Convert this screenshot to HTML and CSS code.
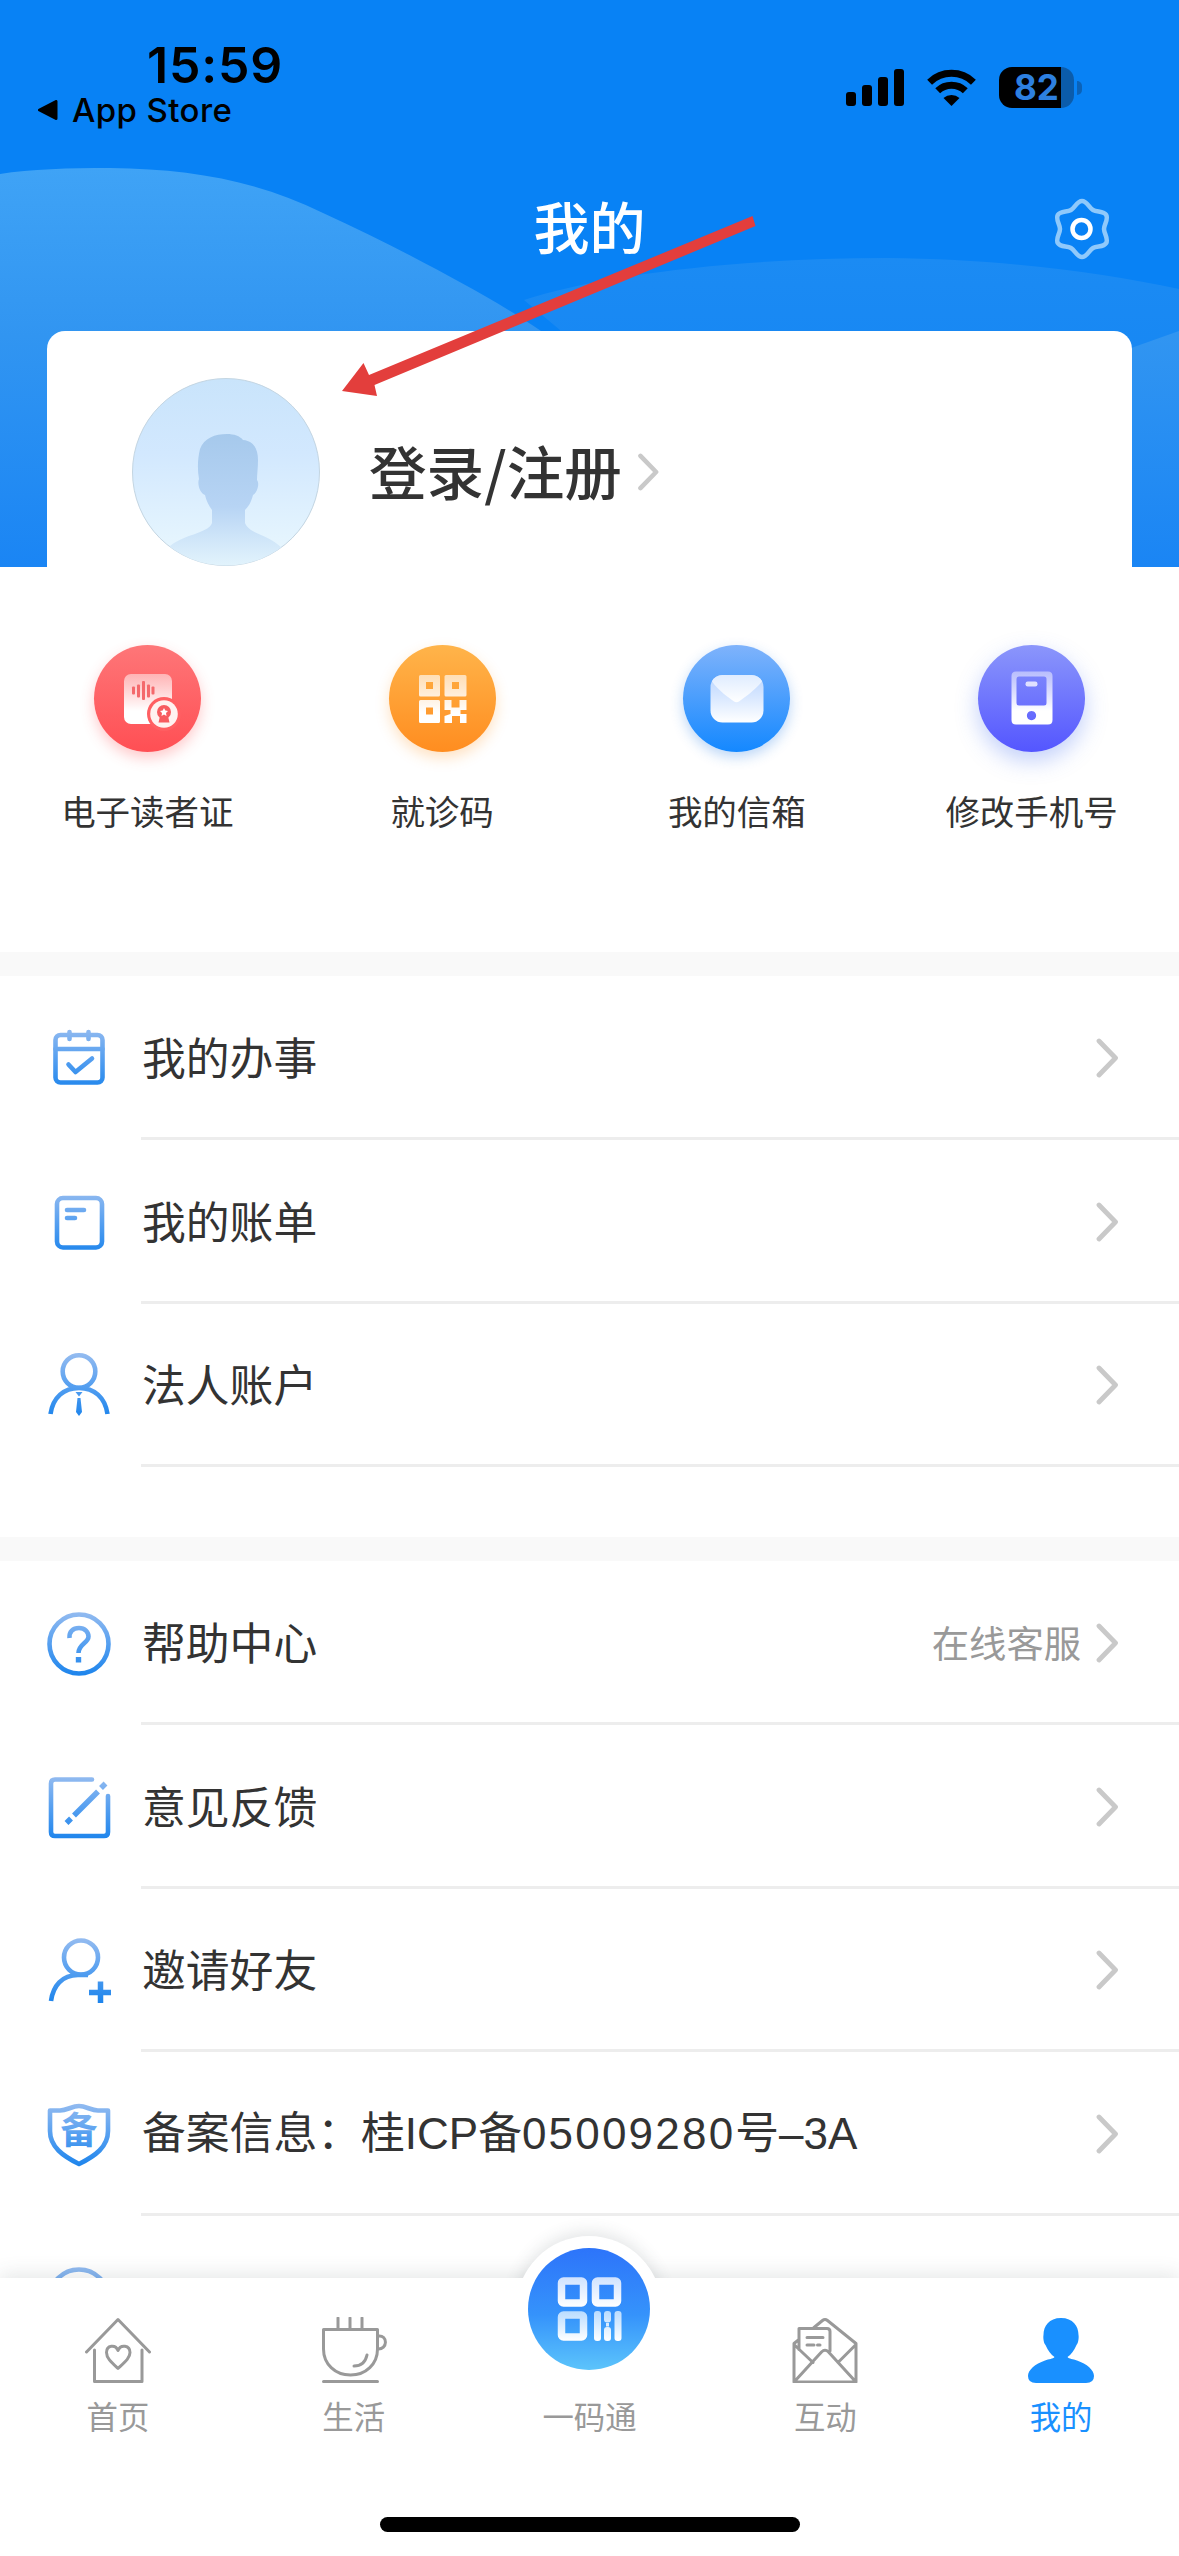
FILE: index.html
```html
<!DOCTYPE html>
<html lang="zh-CN">
<head>
<meta charset="utf-8">
<title>我的</title>
<link rel="stylesheet" href="styles.css">
</head>
<body>
<svg class="defs" width="0" height="0" aria-hidden="true">
  <defs>
    <linearGradient id="line" gradientUnits="userSpaceOnUse" x1="0" y1="0" x2="0" y2="64"><stop offset="0" stop-color="#93bbf0"/><stop offset=".5" stop-color="#559ff0"/><stop offset="1" stop-color="#1c84ec"/></linearGradient>
    <linearGradient id="glass" gradientUnits="userSpaceOnUse" x1="0" y1="26" x2="0" y2="79"><stop offset="0" stop-color="#fff" stop-opacity=".45"/><stop offset=".75" stop-color="#fff"/></linearGradient>
    <linearGradient id="glass2" gradientUnits="userSpaceOnUse" x1="0" y1="28" x2="0" y2="78"><stop offset="0" stop-color="#fff" stop-opacity=".6"/><stop offset=".8" stop-color="#fff"/></linearGradient>
    <symbol id="chevron" viewBox="0 0 24 40"><path d="M3 3L19.500 20L3 37" fill="none" stroke="#c9c9c9" stroke-width="4.800" stroke-linecap="round" stroke-linejoin="round"/></symbol>
  </defs>
</svg>

<main class="page">
  <header class="hero">
    <svg class="hero-waves" viewBox="0 0 1179 567" width="1179" height="567">
      <defs>
        <linearGradient id="w1" gradientUnits="userSpaceOnUse" x1="0" y1="168" x2="0" y2="567"><stop offset="0" stop-color="#3fa3f6"/><stop offset=".42" stop-color="#3195f1"/><stop offset="1" stop-color="#1a85f4"/></linearGradient>
        <linearGradient id="w2" gradientUnits="userSpaceOnUse" x1="0" y1="258" x2="0" y2="567"><stop offset="0" stop-color="#1b8bf3"/><stop offset="1" stop-color="#0f80f3"/></linearGradient>
      </defs>
      <path d="M524 300C600 275 740 258 887 258C1000 259 1100 272 1179 289V567H560V330Z" fill="url(#w2)"/>
      <path d="M1060 375L1134 347L1179 331V567H1060Z" fill="url(#w1)"/>
      <path d="M0 174C30 169 70 168 110 168C190 169 255 180 323 213C355 228 385 242 413 257C455 279 505 306 541 331L560 350V567H0Z" fill="url(#w1)"/>
    </svg>
    <div class="status">
      <div class="status-left">
        <span class="time">15:59</span>
        <span class="back">
          <svg width="20" height="20" viewBox="0 0 20 20"><path d="M18 1.500V18.500L1.500 10Z" stroke="#000" stroke-width="3" stroke-linejoin="round"/></svg>
          <span>App Store</span>
        </span>
      </div>
      <div class="status-right">
        <svg width="58" height="37" viewBox="0 0 58 37"><rect y="23" width="10" height="14" rx="3"/><rect x="16" y="16" width="10" height="21" rx="3"/><rect x="32" y="8" width="10" height="29" rx="3"/><rect x="48" width="10" height="37" rx="3"/></svg>
        <svg class="wifi" width="49" height="37" viewBox="0 0 49 37"><path d="M2.600 13.200A31.500 31.500 0 0 1 46.400 13.200M10.700 21.700A20 20 0 0 1 38.300 21.700" fill="none" stroke="#000" stroke-width="7"/><path d="M24.500 37L16.500 29A12.500 12.500 0 0 1 32.500 29Z"/></svg>
        <div class="battery"><span>82</span></div>
        <i class="battery-nub"></i>
      </div>
    </div>
    <div class="navbar">
      <h1>我的</h1>
      <svg class="gear" width="60" height="64" viewBox="0 0 60 64" fill="none">
        <path d="M30 4C35 4 37 10.700 41 13C45 15.300 51.700 13.700 54.200 18C56.700 22.300 52 27.400 52 32C52 36.600 56.700 41.700 54.200 46C51.700 50.300 45 48.700 41 51C37 53.300 35 60 30 60C25 60 23 53.300 19 51C15 48.700 8.300 50.300 5.800 46C3.300 41.700 8 36.600 8 32C8 27.400 3.300 22.300 5.800 18C8.300 13.700 15 15.300 19 13C23 10.700 25 4 30 4Z" stroke="#8fc9fb" stroke-width="4.500"/>
        <circle cx="29.500" cy="32" r="9" stroke="#fff" stroke-width="4.500"/>
      </svg>
    </div>
    <section class="login">
      <svg class="avatar" width="188" height="188" viewBox="0 0 188 188">
        <defs>
          <linearGradient id="av" x1="0" y1="0" x2="0" y2="1"><stop offset="0" stop-color="#c9e4fb"/><stop offset=".4" stop-color="#d2e8fe"/><stop offset="1" stop-color="#eaf8fe"/></linearGradient>
          <linearGradient id="ph" gradientUnits="userSpaceOnUse" x1="0" y1="56" x2="0" y2="188"><stop offset="0" stop-color="#a6c9ec"/><stop offset=".55" stop-color="#b7d4f4"/><stop offset=".8" stop-color="#d0e6f9"/><stop offset="1" stop-color="#e2f3fc"/></linearGradient>
          <clipPath id="avc"><circle cx="94" cy="94" r="93.500"/></clipPath>
        </defs>
        <circle cx="94" cy="94" r="93.500" fill="url(#av)" stroke="#c3d5e2" stroke-width="1"/>
        <path clip-path="url(#avc)" d="M67 101C65 90 66 79 68 71C72 60 83 56 95 56C102 56 108 58 111 62C122 63 126 71 126 82C126 90 125 96 125 102C128 106 125 115 121 117C119 125 116 129 113 132V145C117 156 136 156 150 170V188H36V170C50 156 76 156 80 145V132C77 128 74 122 73 117C68 115 65 106 67 101Z" fill="url(#ph)"/>
      </svg>
      <span class="login-text">登录/注册</span>
      <svg class="login-chevron" width="24" height="38"><use href="#chevron"/></svg>
    </section>
    <svg class="pointer" width="420" height="185" viewBox="0 0 420 185"><path d="M1 179L22.500 151L28 163L411.500 4L414.500 14L33.500 173L36 184Z" fill="#e33e3c"/></svg>
  </header>

  <nav class="quick">
    <a class="quick-item">
      <svg class="disc disc-red" width="107" height="107" viewBox="0 0 107 107">
        <rect x="30" y="29" width="48" height="50" rx="7" fill="url(#glass)"/>
        <g fill="#f4696c"><rect x="38" y="41.500" width="3" height="8" rx="1"/><rect x="43" y="39.500" width="3" height="13" rx="1"/><rect x="48" y="36" width="3" height="19" rx="1"/><rect x="53" y="39.500" width="3" height="13" rx="1"/><rect x="57.500" y="41.500" width="3" height="8" rx="1"/></g>
        <circle cx="70" cy="69" r="17" fill="#ff5f62"/><circle cx="70" cy="69" r="13.800" fill="#fff2f0"/>
        <path d="M66 71L64.500 77.500H75.500L74 71Z" fill="#f75c60"/><circle cx="70" cy="67" r="7" fill="#f75c60"/>
        <path d="M70 63L71.300 65.600L74 66L72 68L72.500 71L70 69.600L67.500 71L68 68L66 66L68.700 65.600Z" fill="#fff"/>
      </svg>
      <span>电子读者证</span>
    </a>
    <a class="quick-item">
      <svg class="disc disc-orange" width="107" height="107" viewBox="0 0 107 107">
        <path fill="url(#glass2)" fill-rule="evenodd" d="M31.500 30H49.500Q51 30 51 31.500V50Q51 51.500 49.500 51.500H31.500Q30 51.500 30 50V31.500Q30 30 31.500 30ZM37 37V44H44V37ZM57 30H76Q77.500 30 77.500 31.500V50Q77.500 51.500 76 51.500H57Q55.500 51.500 55.500 50V31.500Q55.500 30 57 30ZM63 37V44H70V37ZM31.500 55H49.500Q51 55 51 56.500V76.500Q51 78 49.500 78H31.500Q30 78 30 76.500V56.500Q30 55 31.500 55ZM37 62.500V69.500H44V62.500ZM55.500 55H62.500V62.500H70.500V55H77.500V65H71.500V69H77.500V78H71V71H63V78H55.500V71L61.500 69V65H55.500Z"/>
      </svg>
      <span>就诊码</span>
    </a>
    <a class="quick-item">
      <svg class="disc disc-blue" width="107" height="107" viewBox="0 0 107 107">
        <defs><linearGradient id="env" x1="0" y1="0" x2="0" y2="1"><stop offset="0" stop-color="#b9d5ff"/><stop offset=".5" stop-color="#dbe9ff"/><stop offset="1" stop-color="#fff"/></linearGradient><linearGradient id="flap" x1="0" y1="0" x2="0" y2="1"><stop offset="0" stop-color="#dfecff"/><stop offset="1" stop-color="#fff"/></linearGradient></defs>
        <rect x="27.500" y="30" width="53" height="47.500" rx="12" fill="url(#env)"/>
        <path d="M29 36.500Q32 30 39.500 30H68.500Q76 30 79 36.500C71 46 62 52 56 56.500Q53.500 58 51 56.500C45 52 36 46 29 36.500Z" fill="url(#flap)"/>
      </svg>
      <span>我的信箱</span>
    </a>
    <a class="quick-item">
      <svg class="disc disc-violet" width="107" height="107" viewBox="0 0 107 107">
        <path fill="url(#glass)" fill-rule="evenodd" d="M38 26.500H70Q74.500 26.500 74.500 31V75Q74.500 79.500 70 79.500H38Q33.500 79.500 33.500 75V31Q33.500 26.500 38 26.500ZM41 31.500Q38.500 31.500 38.500 34V58Q38.500 60.500 41 60.500H66Q68.500 60.500 68.500 58V34Q68.500 31.500 66 31.500ZM53.500 66A4.600 4.600 0 1 0 53.510 66Z"/>
        <rect x="47.500" y="36.500" width="12" height="5" rx="2.200" fill="#dfe0ff"/>
      </svg>
      <span>修改手机号</span>
    </a>
  </nav>

  <section class="list">
    <div class="row">
      <svg class="row-icon" viewBox="0 0 64 64"><rect x="8.500" y="8" width="47" height="47.500" rx="5"/><path d="M8.500 22H55.500M22.500 5V12M41.500 5V12M21.500 37.500L28.500 45L45 31.500"/></svg>
      <div class="row-body"><span class="row-title">我的办事</span><svg class="row-chevron"><use href="#chevron"/></svg></div>
    </div>
    <div class="row">
      <svg class="row-icon" viewBox="0 0 64 64"><rect x="10" y="7" width="45" height="49.500" rx="6"/><path d="M20 19H37M20 27H28"/></svg>
      <div class="row-body"><span class="row-title">我的账单</span><svg class="row-chevron"><use href="#chevron"/></svg></div>
    </div>
    <div class="row">
      <svg class="row-icon butt" viewBox="0 0 64 64"><circle cx="32" cy="17.500" r="16.300"/><path d="M3.500 60C6 43 17 34 32 34S58 43 60.500 60"/><path class="solid" d="M28.500 38H35.500L32 42.500ZM30.500 44H33.500L35 58L32 62L29 58Z"/></svg>
      <div class="row-body"><span class="row-title">法人账户</span><svg class="row-chevron"><use href="#chevron"/></svg></div>
    </div>
  </section>

  <section class="list list-more">
    <div class="row">
      <svg class="row-icon butt" viewBox="0 0 64 64"><circle cx="32" cy="32" r="29.500"/><path d="M22.500 26C22 19.500 26 16 32 16C38 16 41.500 20 41.500 24.500C41.500 31 31.500 32 31.500 41"/><path class="solid" d="M28.800 45H34.200V50.500H28.800Z"/></svg>
      <div class="row-body"><span class="row-title">帮助中心</span><span class="row-note">在线客服</span><svg class="row-chevron"><use href="#chevron"/></svg></div>
    </div>
    <div class="row">
      <svg class="row-icon" viewBox="0 0 64 64"><path d="M45 3.500H8Q4 3.500 4 7.500V56Q4 60 8 60H57Q61 60 61 56V20"/><path class="butt thick" d="M27 39.500L51 15.500M19.500 47L24 42.500M54 12L58.500 7.500"/></svg>
      <div class="row-body"><span class="row-title">意见反馈</span><svg class="row-chevron"><use href="#chevron"/></svg></div>
    </div>
    <div class="row">
      <svg class="row-icon butt" viewBox="0 0 64 64"><circle cx="34" cy="18.500" r="17"/><path d="M4 62C6 47 15 36 31 36H41"/><path class="thick" d="M42 53.500H64M53.500 42.500V64"/></svg>
      <div class="row-body"><span class="row-title">邀请好友</span><svg class="row-chevron"><use href="#chevron"/></svg></div>
    </div>
    <div class="row">
      <svg class="row-icon butt" viewBox="0 0 64 64"><path d="M32 3C25 3 20 7.500 13 7.500H3V28C3 44 16 53 32 61C48 53 61 44 61 28V7.500H51C44 7.500 39 3 32 3Z"/><text x="32" y="41" text-anchor="middle">备</text></svg>
      <div class="row-body"><span class="row-title">备案信息：桂<span class="latin">ICP</span>备<span class="latin digits">05009280</span>号<span class="latin">–3A</span></span><svg class="row-chevron"><use href="#chevron"/></svg></div>
    </div>
    <div class="row">
      <svg class="row-icon" viewBox="0 0 64 64"><circle cx="32" cy="32" r="29.500"/></svg>
      <div class="row-body"></div>
    </div>
  </section>
</main>

<footer class="dock">
  <nav class="tabs">
    <a class="tab">
      <svg class="tab-icon" viewBox="0 0 66 66"><path d="M1.500 35L33 2.500L64.500 35M9.500 33V64.500H57V33M33 51.500C26 45 21.500 41 21.500 35.500C21.500 28 30.500 27 33 33.500C35.500 27 45 28 45 35.500C45 41 40 45 33 51.500Z"/></svg>
      <span>首页</span>
    </a>
    <a class="tab">
      <svg class="tab-icon" viewBox="0 0 66 66"><path d="M2.500 12.500H56.500V32C56.500 47 45 58 29.500 58S2.500 47 2.500 32ZM2.500 64.500H56.500M17 1V11M29 1V11M41 1V11M57 19C67 17.500 67 33 56.500 32M46 38C44.500 45 40 49 33 49"/></svg>
      <span>生活</span>
    </a>
    <a class="tab">
      <i class="scan">
        <svg width="122" height="122" viewBox="0 0 122 122">
          <defs><linearGradient id="q" gradientUnits="userSpaceOnUse" x1="0" y1="29" x2="0" y2="59"><stop offset="0" stop-color="#cfe2ff"/><stop offset="1" stop-color="#fff"/></linearGradient><linearGradient id="q2" gradientUnits="userSpaceOnUse" x1="0" y1="63" x2="0" y2="93"><stop offset="0" stop-color="#b9dcff"/><stop offset="1" stop-color="#fff"/></linearGradient></defs>
          <g fill="none" stroke-width="7.500"><rect x="33.500" y="33" width="22" height="22" rx="2" stroke="url(#q)"/><rect x="67.500" y="33" width="22" height="22" rx="2" stroke="url(#q)"/><rect x="33.500" y="67" width="22" height="22" rx="2" stroke="url(#q2)"/></g>
          <g fill="url(#q2)"><rect x="66" y="63" width="7" height="30" rx="3"/><rect x="76" y="63" width="7" height="11.500" rx="3"/><rect x="78" y="75" width="3" height="3.500"/><rect x="76" y="79" width="7" height="14" rx="3"/><rect x="86.500" y="63" width="7" height="30" rx="3"/></g>
        </svg>
      </i>
      <span>一码通</span>
    </a>
    <a class="tab">
      <svg class="tab-icon" viewBox="0 0 66 66"><path d="M22 10.500L30.500 3.500Q33 1.500 35.500 3.500L64 26.500V65H2V26.500L7 22.500M7 32.500V11.500H35Q38 11.500 38 14.500V34M2.500 28L21 45.500M63.500 28L46 45.500M2.500 64.500L29.500 35Q33 31.500 36.500 35L63.500 64.500M15 20.500H31M15 28H22M25.500 28H28"/></svg>
      <span>互动</span>
    </a>
    <a class="tab tab-active">
      <svg class="tab-icon" viewBox="0 0 66 66"><path d="M33 1C21 1 15.500 9 15.500 18C15 20 15.500 26 17.500 28C20 34 23 37.500 26.500 40C25 42 21 42 17 43.500C7 47 0 53 0 59Q0 66 8 66H58Q66 66 66 59C66 53 59 47 49 43.500C45 42 41 42 39.500 40C43 37.500 46 34 48.500 28C50.500 26 51 20 50.500 18C50.500 9 45 1 33 1Z"/></svg>
      <span>我的</span>
    </a>
  </nav>
  <i class="home-bar"></i>
</footer>
</body>
</html>
```
FILE: styles.css
```css
* { box-sizing: border-box; }

body {
  margin: 0;
  width: 1179px;
  height: 2556px;
  display: flex;
  flex-direction: column;
  overflow: hidden;
  background: #fff;
  color: #333;
  font-family: "Noto Sans CJK SC", sans-serif;
  font-weight: 400;
}

svg { display: block; flex: none; }
.defs { position: absolute; }

.page { height: 2278px; flex: none; overflow: hidden; }

/* Header */
.hero { position: relative; height: 567px; background: #0882f5; display: flex; flex-direction: column; }
.hero-waves { position: absolute; left: 0; top: 0; }
.status { position: relative; height: 140px; display: flex; justify-content: space-between; color: #000; font-family: Inter, sans-serif; }
.status-left { padding: 40px 0 0 38px; display: flex; flex-direction: column; }
.time { margin-left: 109px; font-size: 50px; line-height: 50px; font-weight: 600; letter-spacing: 0.8px; }
.back { display: flex; align-items: center; gap: 14px; height: 40px; margin-top: 0; font-size: 33px; line-height: 40px; font-weight: 500; letter-spacing: 0.4px; }
.status-right { display: flex; align-items: center; height: 41px; margin: 67px 97px 0 0; }
.wifi { margin: 0 23px; }
.battery { width: 75px; height: 41px; border-radius: 13px; background: linear-gradient(90deg, #000 62px, #0b5cab 62px); color: #2d80e0; font-size: 35px; line-height: 41px; font-weight: 700; padding-left: 15px; }
.battery-nub { width: 5px; height: 14px; margin-left: 3px; border-radius: 0 5px 5px 0; background: #0b62b8; }

.navbar { position: relative; height: 176px; display: grid; grid-template-columns: 1fr auto 1fr; align-items: center; }
.navbar h1 { grid-column: 2; margin: 0; padding-bottom: 6px; color: #fff; font-size: 56px; line-height: 64px; font-weight: 500; }
.gear { justify-self: end; margin: 2px 67px 0 0; }

.login { position: relative; height: 236px; margin: 15px 47px 0; padding-left: 85px; border-radius: 18px 18px 0 0; background: #fff; display: flex; align-items: center; padding-top: 46px; }
.avatar { margin-right: 49px; }
.login-text { padding-bottom: 4px; font-size: 57.6px; line-height: 70px; font-weight: 500; }
.login-chevron { margin-left: 15px; }
.pointer { position: absolute; left: 341px; top: 212px; }

/* Shortcuts */
.quick { height: 385px; padding-top: 78px; display: grid; grid-template-columns: repeat(4, 1fr); }
.quick-item { display: flex; flex-direction: column; align-items: center; gap: 37px; font-size: 34.5px; line-height: 42px; }
.disc { border-radius: 50%; }
.disc-red { background: linear-gradient(#fe7678, #ff4f54); box-shadow: 0 6px 14px rgba(255, 80, 84, .3); }
.disc-orange { background: linear-gradient(#ffb44a, #ff8d20); box-shadow: 0 6px 14px rgba(255, 150, 40, .28); }
.disc-blue { background: linear-gradient(#7fb3fb, #1488ff); box-shadow: 0 5px 13px rgba(30, 120, 230, .3); }
.disc-violet { background: linear-gradient(#8b96fb, #5456ff); box-shadow: 0 9px 22px rgba(80, 120, 240, .35); }

/* Lists */
.list { border-top: 24px solid #f9f9f9; height: 585px; }
.list-more { height: auto; }
.row { height: 163.75px; padding-left: 47px; display: flex; align-items: center; }
.row-icon { width: 64px; height: 64px; margin-top: 2px; overflow: visible; fill: none; stroke: url(#line); stroke-width: 4.6; stroke-linecap: round; stroke-linejoin: round; }
.row-icon.butt, .row-icon .butt { stroke-linecap: butt; }
.row-icon .thick { stroke-width: 5.500; }
.row-icon .solid { fill: url(#line); stroke: none; }
.row-icon text { fill: url(#line); stroke: none; font-size: 37px; font-weight: 700; }
.row-body { flex: 1; height: 100%; margin-left: 30px; padding: 3px 59px 0 1px; border-bottom: 3px solid #ededed; display: flex; align-items: center; font-size: 43.8px; }
.row-title { flex: 1; padding-bottom: 4px; line-height: 60px; }
.row-note { margin-right: 15px; padding-bottom: 2px; color: #999; font-size: 37.3px; line-height: 50px; }
.row-chevron { width: 24px; height: 40px; }
.latin { font-family: "Liberation Sans", sans-serif; font-size: 44px; }
.digits { letter-spacing: 2.2px; }

/* Bottom navigation */
.dock { position: relative; height: 278px; background: #fff; box-shadow: 0 -4px 18px rgba(60, 80, 80, .13); }
.tabs { height: 239px; display: grid; grid-template-columns: repeat(5, 1fr); }
.tab { position: relative; display: flex; flex-direction: column; align-items: center; justify-content: flex-end; height: 159px; gap: 12px; color: #999; font-size: 31.400px; line-height: 42px; }
.tab-icon { width: 66px; height: 66px; fill: none; stroke: #999; stroke-width: 3; stroke-linejoin: round; stroke-linecap: round; }
.tab-active { color: #1990ff; }
.tab-active .tab-icon { fill: #1990ff; stroke: none; }

/* The white rim and its shadow show only above the bar's top edge */
.scan { position: absolute; left: 50%; top: -42px; width: 146px; height: 146px; margin-left: -73px; padding: 12px; }
.scan::before { content: ""; position: absolute; inset: 0; border-radius: 50%; background: #fff; box-shadow: 0 -4px 16px rgba(60, 70, 80, .14); clip-path: inset(-30px -30px 104px -30px); }
.scan svg { position: relative; border-radius: 50%; background: linear-gradient(#2d74fa, #3593fb 55%, #5cc4fb); }
.home-bar { display: block; width: 420px; height: 15px; margin: 0 auto; border-radius: 8px; background: #000; }
```
